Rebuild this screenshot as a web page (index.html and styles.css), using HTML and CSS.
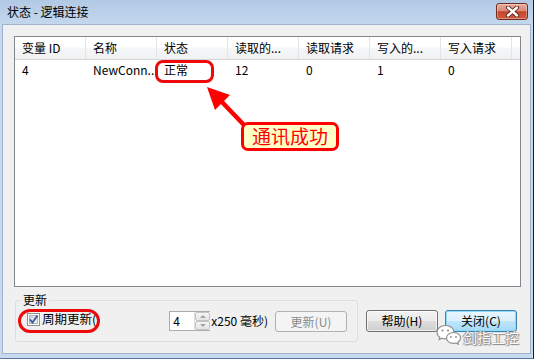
FILE: index.html
```html
<!DOCTYPE html>
<html lang="zh">
    <head>
        <meta charset="UTF-8" />
        <title>状态 - 逻辑连接</title>
        <link rel="stylesheet" href="styles.css">
    </head>
    <body>
        <div class="window">
            <div class="titlebar">
                <span class="title">状态 - 逻辑连接</span>
                <div class="close-x">
                    <svg width="17" height="11" viewBox="0 0 17 11">
                        <path d="M4 1.5 L13 9.5 M13 1.5 L4 9.5" stroke="#5a2018" stroke-width="4.2" stroke-linecap="round" />
                        <path d="M4 1.5 L13 9.5 M13 1.5 L4 9.5" stroke="#fff" stroke-width="2.4" stroke-linecap="round" />
                    </svg>
                </div>
            </div>

            <div class="client">
                <div class="list">
                    <div class="list-head">
                        <div class="col">变量 ID</div>
                        <div class="col">名称</div>
                        <div class="col">状态</div>
                        <div class="col">读取的...</div>
                        <div class="col">读取请求</div>
                        <div class="col">写入的...</div>
                        <div class="col">写入请求</div>
                        <div class="col rest"></div>
                    </div>
                    <div class="list-row">
                        <div class="col">4</div>
                        <div class="col">NewConn...</div>
                        <div class="col">正常</div>
                        <div class="col">12</div>
                        <div class="col">0</div>
                        <div class="col">1</div>
                        <div class="col">0</div>
                    </div>
                </div>

                <div class="bottom">
                    <fieldset class="group">
                        <legend>更新</legend>
                        <div class="group-row">
                            <label class="check">
                                <svg class="box" width="13" height="13" viewBox="0 0 13 13">
                                    <defs>
                                        <linearGradient id="cb" x1="0" y1="0" x2="1" y2="1">
                                            <stop offset="0" stop-color="#cbcfd5" />
                                            <stop offset="1" stop-color="#f6f6f6" />
                                        </linearGradient>
                                    </defs>
                                    <rect x="0.5" y="0.5" width="12" height="12" fill="#fff" stroke="#8e8f8f" />
                                    <rect x="2.5" y="2.5" width="8" height="8" fill="url(#cb)" stroke="#aeb3b9" />
                                    <path d="M3 6.5 L5.5 9.5 L10.5 2.5" fill="none" stroke="#3a5894" stroke-width="1.8" />
                                </svg>
                                周期更新(
                            </label>
                            <div class="spin">
                                <span class="spin-edit">4</span>
                                <span class="spin-btns">
                                    <span class="spin-btn"><i class="up"></i></span>
                                    <span class="spin-btn"><i class="down"></i></span>
                                </span>
                            </div>
                            <span class="unit">x250 毫秒)</span>
                            <div class="btn disabled">更新(U)</div>
                        </div>
                    </fieldset>
                    <div class="btn side">帮助(H)</div>
                    <div class="btn side default">关闭(C)</div>
                </div>
            </div>

            <!-- annotations drawn over the dialog -->
            <div class="mark mark-state"></div>
            <div class="mark mark-check"></div>
            <svg class="arrow" width="50" height="50" viewBox="0 0 50 50">
                <path d="M21 21 L44 45" stroke="#f00" stroke-width="4.5" />
                <polygon points="7,7 15,30 30,15" fill="#f00" />
            </svg>
            <div class="callout">通讯成功</div>

            <div class="watermark">
                <svg width="26" height="21" viewBox="0 0 26 21">
                    <path d="M9.5 1.5 C4.5 1.5 1 4.6 1 8.3 C1 10.4 2.1 12.2 3.9 13.4 L3.2 15.6 L5.9 14.3 C7 14.7 8.2 14.9 9.5 14.9 C14.5 14.9 18 11.9 18 8.2 C18 4.6 14.5 1.5 9.5 1.5 Z" fill="#fff" stroke="#8c8c8c" stroke-width="1.1" />
                    <path d="M17.5 8.5 C13.4 8.5 10.5 11 10.5 14 C10.5 17 13.4 19.4 17.5 19.4 C18.4 19.4 19.2 19.3 20 19 L22.3 20.2 L21.7 18.2 C23.4 17.2 24.6 15.7 24.6 14 C24.6 11 21.6 8.5 17.5 8.5 Z" fill="#fff" stroke="#8c8c8c" stroke-width="1.1" />
                    <circle cx="6.5" cy="6.5" r="1.1" fill="#8c8c8c" />
                    <circle cx="12" cy="6.5" r="1.1" fill="#8c8c8c" />
                    <circle cx="15" cy="13" r="0.9" fill="#8c8c8c" />
                    <circle cx="20" cy="13" r="0.9" fill="#8c8c8c" />
                </svg>
                <span class="wm-text">剑指工控</span>
            </div>
        </div>
    </body>
</html>
```

FILE: styles.css
```css
* {
    box-sizing: border-box;
}

body {
    margin: 0;
    font-family: "Noto Sans CJK SC", "Noto Sans", sans-serif;
    font-size: 12px;
    color: #000;
}

.window {
    position: relative;
    width: 534px;
    height: 359px;
    padding: 0 2px 4px 2px;
    background: linear-gradient(#b2c9e5, #c5d8ee 26px, #c8daef);
    border-right: 1px solid #1c1c1c;
    border-bottom: 1px solid #59779a;
    display: flex;
    flex-direction: column;
    overflow: hidden;
}

.titlebar {
    height: 24px;
    flex: none;
    display: flex;
    align-items: center;
    justify-content: space-between;
    padding: 0 3px 0 5px;
}

.title {
    font-size: 12px;
    line-height: 16px;
}

.close-x {
    width: 32px;
    height: 17px;
    margin-top: -2px;
    border: 1px solid #6e2b20;
    border-radius: 3px;
    background: linear-gradient(#e9ab9c 0%, #d88a78 45%, #c5432c 52%, #d15a3d 100%);
    box-shadow: inset 0 0 0 1px rgba(255, 255, 255, 0.35);
    display: flex;
    align-items: center;
    justify-content: center;
}

.client {
    flex: 1;
    background: #f0f0f0;
    border: 1px solid #9fb4cc;
    display: flex;
    flex-direction: column;
}

.list {
    height: 251px;
    margin: 11px 9px 0 11px;
    background: #fff;
    border: 1px solid #828790;
}

.list-head,
.list-row {
    display: grid;
    grid-template-columns: repeat(7, 71px) 1fr;
}

.list-head {
    height: 23px;
    background: linear-gradient(#fff 0%, #fff 45%, #f6f7f9 50%, #f0f1f3 100%);
    border-bottom: 1px solid #d5d5d5;
}

.list-head .col {
    line-height: 22px;
    padding-left: 7px;
    border-right: 1px solid #e3e5e8;
    white-space: nowrap;
}

.list-head .col.rest {
    border-right: none;
}

.list-row .col {
    height: 19px;
    line-height: 19px;
    padding-left: 7px;
    white-space: nowrap;
}

.bottom {
    display: flex;
    align-items: flex-start;
    margin: 5px 0 0 12px;
    gap: 7px;
}

.group {
    width: 343px;
    margin: 0 1px 0 0;
    padding: 2px 10px 9px 11px;
    border: 1px solid #d5dfe5;
    border-radius: 3px;
}

.group legend {
    margin-left: -6px;
    padding: 0 2px;
    line-height: 16px;
}

.group-row {
    height: 22px;
    display: flex;
    align-items: center;
}

.check {
    align-self: flex-start;
    margin-top: 1px;
    display: flex;
    align-items: center;
    gap: 2px;
    line-height: 16px;
    font-size: 12.5px;
}

.spin {
    margin-left: auto;
    height: 20px;
    display: flex;
    border: 1px solid #abadb3;
    border-right: none;
    background: #fff;
}

.spin-edit {
    width: 24px;
    padding-left: 3px;
    line-height: 18px;
}

.spin-btns {
    width: 16px;
    display: flex;
    flex-direction: column;
    border-left: 1px solid #dcdcdc;
}

.spin-btn {
    flex: 1;
    display: flex;
    align-items: center;
    justify-content: center;
    background: linear-gradient(#f5f5f5, #e4e4e4);
    border: 1px solid #c3c3c3;
    border-radius: 2px;
}

.spin-btn i {
    width: 0;
    height: 0;
    border-left: 3px solid transparent;
    border-right: 3px solid transparent;
}

.spin-btn .up {
    border-bottom: 3px solid #a3a3a3;
}

.spin-btn .down {
    border-top: 3px solid #a3a3a3;
}

.unit {
    margin: 0 7px 0 1px;
    line-height: 16px;
}

.btn {
    width: 72px;
    height: 21px;
    line-height: 19px;
    text-align: center;
    border: 1px solid #707070;
    border-radius: 3px;
    background: linear-gradient(#f2f2f2 0%, #ebebeb 48%, #dddddd 52%, #cfcfcf 100%);
    box-shadow: inset 0 0 0 1px rgba(255, 255, 255, 0.7);
}

.btn.disabled {
    color: #8a8a8a;
    border-color: #adb2b5;
    background: #f4f4f4;
    box-shadow: none;
}

.btn.side {
    height: 22px;
    line-height: 19px;
    margin-top: 18px;
}

.btn.default {
    border-color: #3c7fb1;
    background: linear-gradient(#eaf6fd 0%, #d9f0fc 48%, #bee6fd 52%, #a7d9f5 100%);
    box-shadow: inset 0 0 0 1px #8fdcf8;
}

.mark {
    position: absolute;
    border: 3px solid #ee0a0a;
}

.mark-state {
    left: 155px;
    top: 60px;
    width: 59px;
    height: 23px;
    border-radius: 8px;
}

.mark-check {
    left: 18px;
    top: 309px;
    width: 82px;
    height: 24px;
    border-radius: 12px;
}

.arrow {
    position: absolute;
    left: 200px;
    top: 80px;
}

.callout {
    position: absolute;
    left: 241px;
    top: 122px;
    width: 98px;
    height: 29px;
    border: 3px solid #f00;
    border-radius: 7px;
    background: #ffffc8;
    color: #f00;
    font-size: 19px;
    line-height: 22px;
    text-align: center;
}

.watermark {
    position: absolute;
    left: 436px;
    top: 324px;
    display: flex;
    align-items: center;
    gap: 1px;
}

.wm-text {
    color: #fff;
    font-size: 14px;
    line-height: 16px;
    margin-top: 5px;
    text-shadow: 0 0 1px #666, 1px 1px 1px #888, -1px 0 1px #888;
}
```
